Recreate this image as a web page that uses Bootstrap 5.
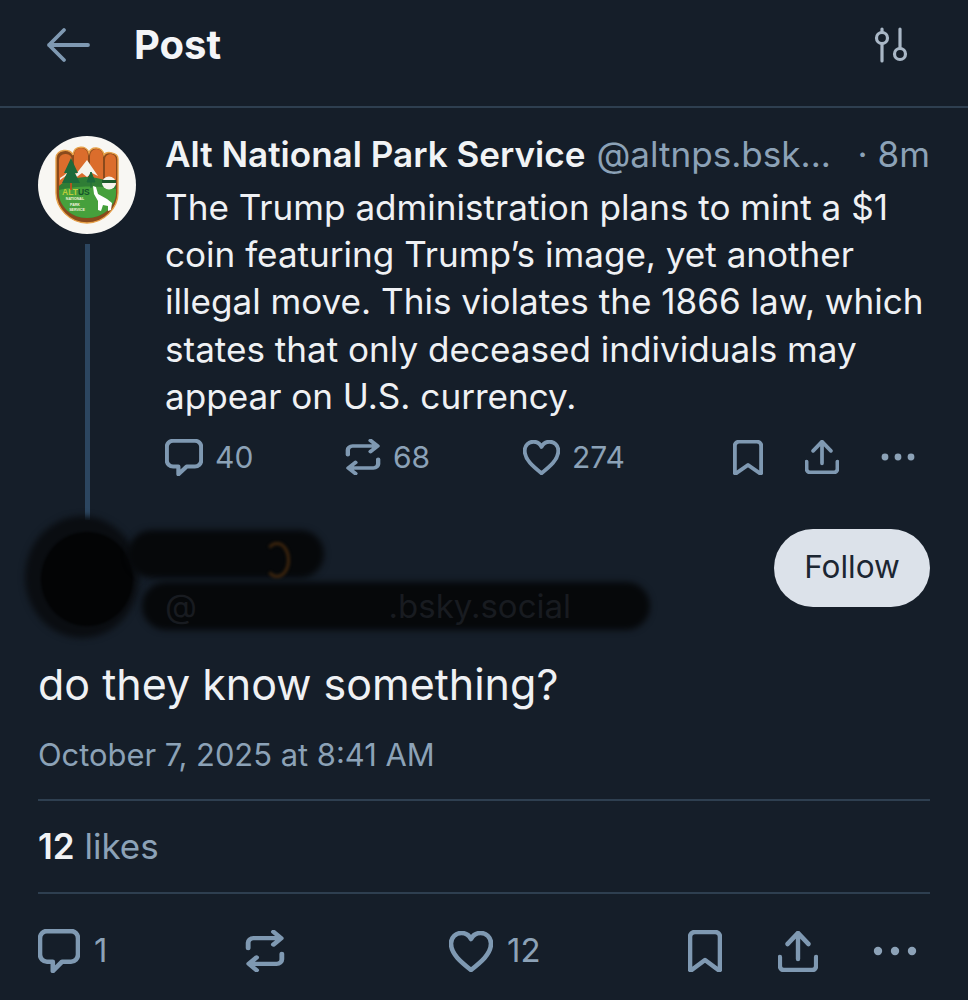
<!doctype html>
<html lang="en"><head><meta charset="utf-8"><title>Post</title>
<link href="https://cdn.jsdelivr.net/npm/bootstrap@5.3.0/dist/css/bootstrap.min.css" rel="stylesheet">
<style>
html,body{background:#151e29;margin:0}
body{font-family:Inter,"Liberation Sans",sans-serif;color:#f1f3f5;width:968px;height:1000px;overflow:hidden}
.ink-icon{fill:none;stroke:#7f99b2;stroke-width:2.300;stroke-linecap:round;stroke-linejoin:round;flex:none;display:block}
.top-bar{height:108px;padding:0 46px 16px;border-bottom:2px solid #2e3f50}
.top-title{font-size:40px;font-weight:700;margin-left:44px;line-height:1;color:#f4f5f7}
.feed-pad{padding:28px 38px 0}
.rail{width:98px;flex:none;margin-right:29px}
.thread-line{width:5px;height:276px;background:#2c4660;margin-top:10px}
.logo{width:98px;height:98px;display:block}
.who{font-size:35.100px;line-height:40px;white-space:nowrap;margin-top:-2px}
.who b{font-weight:600;color:#f1f3f5;margin-right:11px}
.who span{color:#8ca2b7}
.who .stamp{margin-left:auto;margin-right:0}
.parent-text{font-size:35.100px;line-height:47.200px;margin-top:10px;color:#eff1f4;white-space:nowrap}
.mini-acts{height:50px;margin-top:12px;color:#8ca2b7;font-size:30px}
.mini-acts>div,.big-acts>div{display:flex;align-items:center;flex:none}
.m1{width:180px}.m2{width:178px}.m3{width:210px}.m4{width:72px}.m5{width:75px}
.num-m{margin-left:12px}
.author{height:100px;margin-top:9px;position:relative}
.scribble{position:absolute;background:#050608;filter:blur(3px);border-radius:40px}
.sc-av{left:-13px;top:-13px;width:114px;height:122px;border-radius:50%;background:#0a0d11}
.sc-core{left:3px;top:3px;width:92px;height:94px;border-radius:50%;background:#030405;filter:blur(1px)}
.sc-nm{left:90px;top:1px;width:196px;height:48px;background:#06080a}
.sc-hd{left:104px;top:53px;width:508px;height:48px;background:#06080a}
.under-hd{position:absolute;left:127px;top:57px;width:406px;font-size:33px;line-height:40px;color:#181b20}
.flare{position:absolute;left:226px;top:13px;width:26px;height:36px;border:3px solid #3f260d;border-left-color:transparent;border-radius:50%;filter:blur(1.500px)}
.follow{margin-left:auto;background:#dce2ea;color:#1c2632;font-size:31.500px;width:156px;height:78px;border-radius:39px;border:0;position:relative;padding:0 0 3px}
.follow:hover{background:#dce2ea;color:#1c2632}
.say{font-size:43px;line-height:50px;margin-top:30px;color:#eff1f4}
.when{font-size:30.900px;line-height:40px;color:#8ca2b7;margin-top:26px;padding-bottom:24px;border-bottom:2px solid #2e3f50}
.likes{font-size:35px;line-height:40px;height:93px;padding-top:25px;border-bottom:2px solid #2e3f50;color:#8ca2b7}
.likes b{font-weight:600;color:#f1f3f5}
.big-acts{height:60px;margin-top:27px;color:#8ca2b7;font-size:33px}
.b1{width:207px}.b2{width:204px}.b3{width:239px}.b4{width:90px}.b5{width:94px}
.num-b{margin-left:14px}
</style></head><body>
<svg width="0" height="0" style="position:absolute" aria-hidden="true"><defs>
<symbol id="i-comment" viewBox="1.500 2.500 21 21.500" preserveAspectRatio="none"><path d="M6 3.500h12a3.500 3.500 0 0 1 3.500 3.500v8a3.500 3.500 0 0 1-3.500 3.500h-4.500l-4.600 4.500v-4.500H6a3.500 3.500 0 0 1-3.500-3.500V7A3.500 3.500 0 0 1 6 3.500Z"/></symbol>
<symbol id="i-repost" viewBox="2.500 .5 19 23" preserveAspectRatio="none"><path d="M16 1.500l3.700 3.500-3.700 3.500M19 5H6.500A2.500 2.500 0 0 0 4 7.500v3M8 22.500L4.300 19 8 15.500M5 19h12.500a2.500 2.500 0 0 0 2.500-2.500v-3"/></symbol>
<symbol id="i-heart" viewBox="1 2 22 20.500" preserveAspectRatio="none"><path d="M12 21.500C7 17.500 2 13.500 2 8.300 2 5 4.500 3 7.200 3 9.200 3 11 4 12 6c1-2 2.800-3 4.800-3C19.500 3 22 5 22 8.300c0 5.200-5 9.200-10 13.200Z"/></symbol>
<symbol id="i-mark" viewBox="3.500 1.500 17 21" preserveAspectRatio="none"><path d="M7 2.500h10a2.500 2.500 0 0 1 2.500 2.500v16.100a.5.5 0 0 1-.8.4L12 16.500l-6.700 5a.5.5 0 0 1-.8-.4V5A2.500 2.500 0 0 1 7 2.500Z"/></symbol>
<symbol id="i-share" viewBox="1.500 2 21 20.500" preserveAspectRatio="none"><path d="M12 16V3M6.500 8.500 12 3l5.500 5.500M2.500 15v4.500a2 2 0 0 0 2 2h15a2 2 0 0 0 2-2V15"/></symbol>
</defs></svg>

<header class="top-bar d-flex align-items-center">
<svg width="44" height="36" viewBox="0 0 44 36" class="ink-icon" style="stroke-width:3.800"><path d="M42 18H3M18 3 3 18l15 15"/></svg>
<div class="top-title">Post</div>
<svg width="34" height="36" viewBox="0 0 34 36" class="ink-icon ms-auto" style="stroke:#a9b7c6;stroke-width:3.200;margin-right:14px"><circle cx="8" cy="11" r="5.500"/><path d="M8 2v3.500M8 16.500V34M26 2v19"/><circle cx="26" cy="27" r="5.500"/></svg>
</header>

<main class="feed-pad">
<section class="d-flex">
<div class="rail d-flex flex-column align-items-center">
<svg class="logo" viewBox="0 0 98 98" role="img" aria-label="Alt National Park Service logo">
<circle cx="49" cy="49" r="49" fill="#f8f7f3"/>
<path d="M18 44V22c0-9 15-10 17-3 1-10 14-10 16-2 2-7 13-7 15 2 2-4 14-3 14 4v34c0 15-14 30-31 30S18 72 18 57Z" fill="#8a4a1c" stroke="#e8a24a" stroke-width="1.400"/>
<g fill="#db6d2c"><rect x="21" y="18" width="13" height="36" rx="6"/><rect x="36" y="12" width="14" height="40" rx="7"/><rect x="52" y="13" width="13" height="40" rx="6.500"/><rect x="67" y="18" width="11" height="36" rx="5.500"/></g>
<path d="M22 42c5-3 8-6 11-10l5 6 11-14 11 16-6-3-5 4-5-4-8 6-7-4-7 5Z" fill="#f6f4ec"/>
<path d="M21 50c6-6 14-8 26-9 12 0 22 3 31 8v8c0 13-13 25-29 25S21 70 21 57Z" fill="#2f7d35"/>
<path d="M21 54c14-4 40-5 57-1v4c0 13-13 25-29 25S21 70 21 57Z" fill="#46a03c"/>
<path d="M33 54V26" stroke="#b2551f" stroke-width="2"/>
<path d="M33 22l-7 15h3l-5 10h18l-5-10h3Z" fill="#1d6a3a"/>
<path d="M53 52V36M49 46l4-10 4 10Z" fill="#1d6a3a" stroke="#1d6a3a"/>
<ellipse cx="71" cy="47" rx="7" ry="6.500" fill="#f6f4ec"/><rect x="64" y="44" width="14" height="3" fill="#1d5a2c"/>
<path d="M55 50l3 1 2 7 9 5 5 4-1 7-3 1v-5l-5-1-2 6-3-1v-9l-4-7Z" fill="#fff"/>
<text x="24" y="58.500" font-family="Liberation Sans" font-size="8.500" font-weight="700" fill="#bccc3a">ALT<tspan fill="#14532a">US</tspan></text>
<text x="37" y="64" text-anchor="middle" font-family="Liberation Sans" font-size="3.600" font-weight="700" fill="#f2f2dc">NATIONAL</text>
<text x="37" y="69.500" text-anchor="middle" font-family="Liberation Sans" font-size="3.600" font-weight="700" fill="#f2f2dc">PARK</text>
<text x="39" y="75" text-anchor="middle" font-family="Liberation Sans" font-size="3.600" font-weight="700" fill="#f2f2dc">SERVICE</text>
</svg>
<div class="thread-line"></div>
</div>
<div class="flex-grow-1">
<div class="who d-flex"><b>Alt National Park Service</b><span>@altnps.bsk...</span><span class="stamp">· 8m</span></div>
<div class="parent-text">The Trump administration plans to mint a $1<br>coin featuring Trump’s image, yet another<br>illegal move. This violates the 1866 law, which<br>states that only deceased individuals may<br>appear on U.S. currency.</div>
<div class="mini-acts d-flex align-items-center">
<div class="m1"><svg class="ink-icon" width="38" height="37"><use href="#i-comment"/></svg><span class="num-m">40</span></div>
<div class="m2"><svg class="ink-icon" width="36" height="36"><use href="#i-repost"/></svg><span class="num-m">68</span></div>
<div class="m3"><svg class="ink-icon" width="37" height="35"><use href="#i-heart"/></svg><span class="num-m">274</span></div>
<div class="m4"><svg class="ink-icon" width="30" height="35"><use href="#i-mark"/></svg></div>
<div class="m5"><svg class="ink-icon" width="34" height="34"><use href="#i-share"/></svg></div>
<div><svg width="36" height="10" viewBox="0 0 36 10" fill="#8ca2b7"><circle cx="5" cy="5" r="3.400"/><circle cx="18" cy="5" r="3.400"/><circle cx="31" cy="5" r="3.400"/></svg></div>
</div>
</div>
</section>

<section class="author d-flex align-items-start">
<div class="scribble sc-av"></div><div class="scribble sc-core"></div><div class="scribble sc-nm"></div><div class="scribble sc-hd"></div>
<div class="under-hd d-flex justify-content-between"><span>@</span><span>.bsky.social</span></div><div class="flare"></div>
<button class="btn follow" type="button">Follow</button>
</section>

<p class="say mb-0">do they know something?</p>
<div class="when">October 7, 2025 at 8:41 AM</div>
<div class="likes"><b>12</b> likes</div>
<div class="big-acts d-flex align-items-center">
<div class="b1"><svg class="ink-icon" width="42" height="44"><use href="#i-comment"/></svg><span class="num-b">1</span></div>
<div class="b2"><svg class="ink-icon" width="40" height="42"><use href="#i-repost"/></svg></div>
<div class="b3"><svg class="ink-icon" width="44" height="41"><use href="#i-heart"/></svg><span class="num-b">12</span></div>
<div class="b4"><svg class="ink-icon" width="34" height="42"><use href="#i-mark"/></svg></div>
<div class="b5"><svg class="ink-icon" width="40" height="41"><use href="#i-share"/></svg></div>
<div><svg width="46" height="12" viewBox="0 0 46 12" fill="#8ca2b7"><circle cx="6" cy="6" r="4.200"/><circle cx="23" cy="6" r="4.200"/><circle cx="40" cy="6" r="4.200"/></svg></div>
</div>
</main>
<script src="https://cdn.jsdelivr.net/npm/bootstrap@5.3.0/dist/js/bootstrap.bundle.min.js"></script>
</body></html>
